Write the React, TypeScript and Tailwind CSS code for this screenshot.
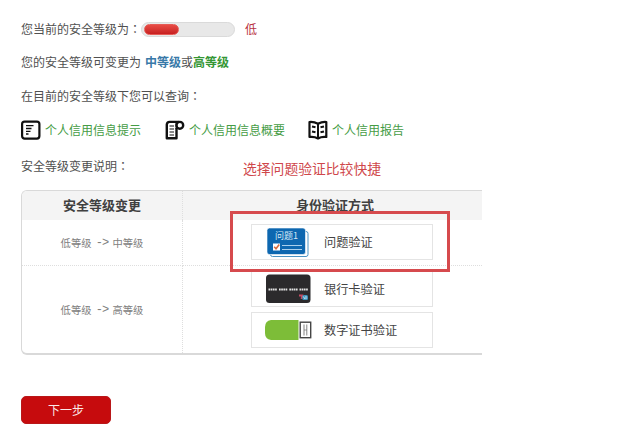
import React from "react";

const NoteIcon = () => (
  <svg width="20" height="20" viewBox="0 0 20 20" fill="none" stroke="#111">
    <rect x="1.100" y="1.600" width="17.300" height="17" rx="2.500" strokeWidth="2.200" />
    <path d="M5 5.700h7.500M5 8.500h5.500M5 11.300h4.500M5 14h2.500" strokeWidth="1.300" />
  </svg>
);

const ScrollIcon = () => (
  <svg width="20" height="20" viewBox="0 0 20 20" fill="none" stroke="#111">
    <path d="M14 1.900H4.500Q2 2 1.800 4.500V18.200H11.500V8" strokeWidth="2.400" strokeLinejoin="round" />
    <circle cx="14.800" cy="5.300" r="3.400" strokeWidth="2.400" />
    <path d="M11.500 2v7" strokeWidth="1.800" />
    <path d="M4.500 6h4.500M4.500 9h4.500M4.500 12h4.500M4.500 15h4.500" strokeWidth="1.200" />
  </svg>
);

const BookIcon = () => (
  <svg width="20" height="20" viewBox="0 0 20 20" fill="none" stroke="#111">
    <path d="M10 3.800Q6 1.600 1.500 2v15Q6.400 16.400 10 18.500Q13.600 16.400 18.300 17V2Q14 1.600 10 3.800Z" strokeWidth="2.200" strokeLinejoin="round" />
    <path d="M10 4v14" strokeWidth="2" />
    <path d="M4 6.500l3.500.8M4 11.500l3.500.8M16 6.500l-3.500.8M16 11.500l-3.500.8" strokeWidth="2" />
  </svg>
);

const QuestionIcon = () => (
  <svg width="48" height="34" viewBox="0 0 48 34">
    <rect x="5.500" y="6.500" width="37.500" height="25" rx="2" fill="#fff" stroke="#4a93c4" />
    <rect x="2" y="3" width="38.500" height="26.500" rx="2.500" fill="#0d67b0" stroke="#fff" strokeWidth=".6" />
    <text x="10" y="14" fontSize="9" fill="#d5e8f7">问题1</text>
    <rect x="8" y="18.500" width="7" height="7" fill="#fff" />
    <path d="M9.200 21.800l1.800 1.900 3.200-4.200" stroke="#d96a3c" strokeWidth="1.600" fill="none" />
    <path d="M17 20.500h20M17 24.500h20" stroke="#a9cfec" strokeWidth="1" />
  </svg>
);

const CardIcon = () => (
  <svg width="48" height="34" viewBox="0 0 48 34">
    <rect x="1" y="2.500" width="44.500" height="28.500" rx="3.500" fill="#2b2a2c" />
    <path d="M3.500 17.500h8.500M14 17.500h8.500M24.300 17.500h8.500M34.500 17.500h8.500" stroke="#e2e2e2" strokeWidth="2.200" strokeDasharray="1.700 .5" />
    <path d="M34 22.500h4.500l-1.200 4.500h-1.600l.3-2.500h-2z" fill="#c44a62" />
    <rect x="37.300" y="23" width="5.700" height="5" rx="1.500" fill="#3c94bd" />
    <path d="M38.300 24.500l1.700 2.500M41 24v3" stroke="#d7e8f2" strokeWidth=".9" />
  </svg>
);

const UsbIcon = () => (
  <svg width="48" height="34" viewBox="0 0 48 34">
    <path d="M33.500 7v20H6Q0 26 0 20v-6Q0 8 6 7z" fill="#7dbd38" />
    <rect x="35.200" y="9.200" width="10.500" height="15.500" fill="#fff" stroke="#454545" strokeWidth="1.400" />
    <path d="M39 11.500v11M41.800 11.500v11" stroke="#777" strokeWidth=".9" />
    <path d="M39 17h3" stroke="#777" strokeWidth=".7" />
  </svg>
);

const Colon = () => <span className="font-['Noto_Sans_CJK_TC',sans-serif]" lang="zh-TW">：</span>;

function QueryLink({ icon, label }: { icon: React.ReactNode; label: string }) {
  return (
    <a className="flex items-center gap-1 text-[#459c45]">
      {icon}
      <span>{label}</span>
    </a>
  );
}

function Change({ from, to }: { from: string; to: string }) {
  return (
    <div className="flex items-center gap-[3px]">
      <span>{from}</span>
      <span className="w-[15px] text-center font-['Liberation_Mono'] text-[12px] tracking-[-1px]">-&gt;</span>
      <span>{to}</span>
    </div>
  );
}

function Method({ icon, label }: { icon: React.ReactNode; label: string }) {
  return (
    <div className="flex h-9 w-[182px] shrink-0 items-center border border-[#e4e4e4] bg-white pl-[13px] text-[12.2px] text-[#444]">
      {icon}
      <span className="ml-[11px] mt-px">{label}</span>
    </div>
  );
}

export default function App() {
  return (
    <main className="h-[445px] w-[640px] overflow-hidden bg-white pl-[21px] pt-3 font-['Noto_Sans_CJK_SC',sans-serif] text-[12px] whitespace-nowrap text-[#505050]">
      <div className="flex h-[34px] items-center">
        <span>您当前的安全等级为<Colon /></span>
        <div className="flex h-[15px] w-[94px] items-center rounded-full border border-[#dadada] bg-[#e8e8e8] px-[2px]">
          <div className="h-[11px] w-[35px] rounded-full border border-[#e55b55] bg-linear-to-b from-[#e84b45] to-[#c71e20]" />
        </div>
        <span className="ml-[10px] text-[#b83243]">低</span>
      </div>
      <div className="flex h-8 items-center">
        <span>您的安全等级可变更为</span>
        <b className="ml-1 text-[#3879a8]">中等级</b>
        <span>或</span>
        <b className="text-[#359735]">高等级</b>
      </div>
      <div className="flex h-[35px] items-center"><span>在目前的安全等级下您可以查询<Colon /></span></div>
      <div className="flex h-[34px] items-center">
        <div className="w-[143px]"><QueryLink icon={<NoteIcon />} label="个人信用信息提示" /></div>
        <div className="w-[144px] pl-px"><QueryLink icon={<ScrollIcon />} label="个人信用信息概要" /></div>
        <QueryLink icon={<BookIcon />} label="个人信用报告" />
      </div>
      <div className="flex h-[43px] items-start">
        <span className="mt-[10px]">安全等级变更说明<Colon /></span>
        <span className="ml-[114px] mt-[11px] text-[13.8px] leading-5 text-[#cf474b]">选择问题验证比较快捷</span>
      </div>

      <section className="relative grid h-[165px] w-[461px] grid-cols-[161px_1fr] grid-rows-[29px_46px_1fr] rounded-l-[6px] border-y border-l border-b-2 border-[#d9d9d9]">
        <div className="flex items-center justify-center rounded-tl-[5px] border-r border-dotted border-[#dedede] bg-[#f4f4f4] pb-0.5 text-[13px] font-bold text-[#404040]">安全等级变更</div>
        <div className="flex items-center bg-[#f4f4f4] pb-0.5 pl-[113px] text-[13px] font-bold text-[#404040]">身份验证方式</div>
        <div className="flex items-center justify-center border-r border-b border-dotted border-[#dedede] text-[10.3px] text-[#808080]">
          <Change from="低等级" to="中等级" />
        </div>
        <div className="border-b border-dotted border-[#dedede] pl-[68px] pt-1">
          <Method icon={<QuestionIcon />} label="问题验证" />
        </div>
        <div className="flex items-center justify-center border-r border-dotted border-[#dedede] pt-px text-[10.3px] text-[#808080]">
          <Change from="低等级" to="高等级" />
        </div>
        <div className="flex flex-col gap-[5px] pl-[68px] pt-[5px]">
          <Method icon={<CardIcon />} label="银行卡验证" />
          <Method icon={<UsbIcon />} label="数字证书验证" />
        </div>
        <div className="absolute left-[208px] top-[20px] h-[61px] w-[220px] border-[3px] border-[#d64a4d]" />
      </section>

      <button className="mt-[41px] flex h-7 w-[90px] items-center justify-center rounded-[5px] border border-[#b91719] bg-[#c60b0d] text-[12px] text-[#fbe9e9]">下一步</button>
    </main>
  );
}
